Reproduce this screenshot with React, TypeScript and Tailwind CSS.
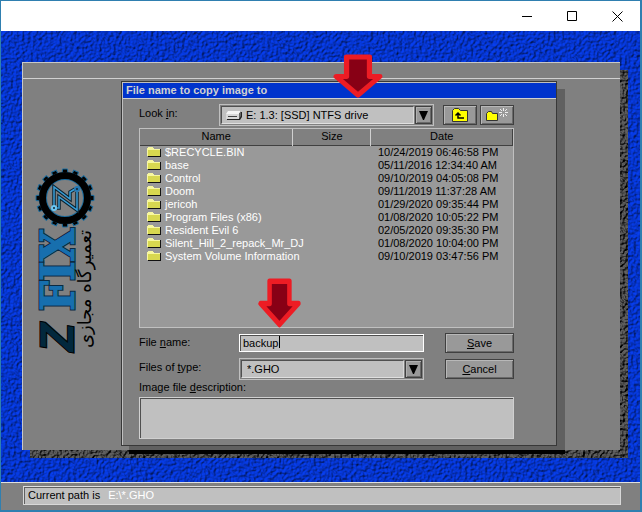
import React from "react";

const files = [
  ["$RECYCLE.BIN", "10/24/2019 06:46:58 PM"],
  ["base", "05/11/2016 12:34:40 AM"],
  ["Control", "09/10/2019 04:05:08 PM"],
  ["Doom", "09/11/2019 11:37:28 AM"],
  ["jericoh", "01/29/2020 09:35:44 PM"],
  ["Program Files (x86)", "01/08/2020 10:05:22 PM"],
  ["Resident Evil 6", "02/05/2020 09:35:30 PM"],
  ["Silent_Hill_2_repack_Mr_DJ", "01/08/2020 10:04:00 PM"],
  ["System Volume Information", "09/10/2019 03:47:56 PM"],
];

function Texture({ id, color, depth }: { id: string; color: string; depth: number }) {
  return (
    <svg className="absolute inset-0 h-full w-full" aria-hidden="true">
      <filter id={id} x="0" y="0" width="100%" height="100%" colorInterpolationFilters="sRGB">
        <feTurbulence type="fractalNoise" baseFrequency="0.35" numOctaves="2" seed="4" result="n" />
        <feDiffuseLighting in="n" surfaceScale={depth} diffuseConstant="1.12" lightingColor={color}>
          <feDistantLight azimuth="225" elevation="58" />
        </feDiffuseLighting>
      </filter>
      <rect width="100%" height="100%" filter={`url(#${id})`} />
    </svg>
  );
}

function FolderIcon() {
  return (
    <svg className="shrink-0" width="14" height="10" viewBox="0 0 14 10" aria-hidden="true" shapeRendering="crispEdges">
      <path d="M1 2h13v8H1z" fill="#111" />
      <path d="M0 1h1V0h5v1h1v1h6v7H0z" fill="#d8d850" />
      <path d="M0 1h1V0h5v1h1v1h6v1H1v6H0z" fill="#f7f7a0" />
    </svg>
  );
}

function DriveIcon() {
  return (
    <svg className="shrink-0" width="16" height="9" viewBox="0 0 16 9" aria-hidden="true">
      <path d="M1 3L3 1h13v5l-2 3H1z" fill="#222" />
      <path d="M0 3L2 0h13l-2 3z" fill="#f4f4f4" />
      <path d="M0 3h13v5H0z" fill="#d8d8d8" />
      <path d="M13 3l2-3v5l-2 3z" fill="#666" />
      <path d="M2 5.500h9" stroke="#444" />
    </svg>
  );
}

function RedArrow() {
  return (
    <svg className="h-full w-full" viewBox="0 0 50 46" preserveAspectRatio="none" aria-hidden="true">
      <path d="M14 3h22v20h10L25 42L4 23h10z" fill="#880015" stroke="#ed1c24" strokeWidth="5" strokeLinejoin="round" />
    </svg>
  );
}

function Logo() {
  const teeth = Array.from({ length: 16 }, (_, i) => i * 22.5);
  const circuit = "M-11 8V-11L5 1V-6L10 -9M-8 10H-6V-1L12 12V-6";
  return (
    <svg className="overflow-visible" width="64" height="188" viewBox="0 0 64 188" role="img" aria-label="Z FIX">
      <g transform="translate(31 32)">
        {teeth.map((a) => (
          <path key={a} d="M-3 -24L-2.500 -29H2.500L3 -24Z" transform={`rotate(${a})`} fill="#000" stroke="#1a6c9e" />
        ))}
        <circle r="22" fill="none" stroke="#1a6c9e" strokeWidth="8" />
        <circle r="22.500" fill="none" stroke="#000" strokeWidth="7" />
        <path d={circuit} fill="none" stroke="#0a2230" strokeWidth="3.500" />
        <path d={circuit} fill="none" stroke="#3a9fd8" strokeWidth="1.500" />
        <circle cx="-11" cy="10" r="2" fill="#123" stroke="#6cc8f4" strokeWidth="2" />
        <circle cx="12" cy="-9" r="2" fill="#123" stroke="#2379b5" strokeWidth="2" />
      </g>
      <g transform="translate(40 186) rotate(-90)">
        <text x="0" y="0" fontFamily="DejaVu Sans Condensed, DejaVu Sans, sans-serif" fontSize="46" fontWeight="700" fontStyle="italic" fill="#02283d" stroke="#000">Z</text>
        <text x="41" y="0" fontFamily="DejaVu Serif Condensed, DejaVu Serif, serif" fontSize="47" fontWeight="700" fill="#176fae" stroke="#0b2a42" strokeWidth="3" paintOrder="stroke">FIX</text>
        <text x="41" y="0" fontFamily="DejaVu Serif Condensed, DejaVu Serif, serif" fontSize="47" fontWeight="700" fill="#176fae" stroke="#176fae" aria-hidden="true">FIX</text>
      </g>
      <text transform="translate(57 123) rotate(-90)" textAnchor="middle" fontFamily="DejaVu Sans, sans-serif" fontSize="18" fill="#000">تعمیرگاه مجازی</text>
    </svg>
  );
}

const frame = "border border-[#c0c0c0] bg-[#808080] p-px";

function Picker({ id, value, icon }: { id: string; value: string; icon?: React.ReactNode }) {
  return (
    <div className={`flex h-[22px] min-w-0 flex-1 ${frame}`}>
      <div className="flex min-w-0 flex-1 items-center border border-[#505050] border-r-[#d8d8d8] border-b-[#e0e0e0] bg-[#c0c0c0] pl-1">
        {icon}
        <select id={id} className={`h-full min-w-0 flex-1 appearance-none bg-transparent text-black outline-none ${icon ? "pl-1" : "pl-px"}`}>
          <option>{value}</option>
        </select>
      </div>
      <button type="button" aria-label="Open list" className="ml-px flex w-[17px] items-center justify-center border border-[#404040] bg-[#999] shadow-[inset_1px_1px_0_#b0b0b0,inset_-1px_-1px_0_#6a6a6a]">
        <svg width="9" height="9" viewBox="0 0 9 9" aria-hidden="true"><path d="M0 0h9L5 9H4z" /></svg>
      </button>
    </div>
  );
}

const button = "flex h-5 items-center justify-center border border-[#404040] bg-[#999] shadow-[inset_1px_1px_0_#b8b8b8,inset_-1px_-1px_0_#6a6a6a]";

export default function App() {
  return (
    <div className="flex min-h-screen flex-col border-t border-r-2 border-b-2 border-l border-[#2f7fb0] bg-[#808080] font-['Liberation_Sans',Arial,sans-serif] text-[11px] leading-[13px] text-black">
      <header className="flex h-[30px] items-center justify-end bg-white">
        <button type="button" aria-label="Minimize" className="flex h-full w-[45px] items-center justify-center">
          <svg width="11" height="11" stroke="#000"><path d="M0 5.5h10" /></svg>
        </button>
        <button type="button" aria-label="Maximize" className="flex h-full w-[45px] items-center justify-center">
          <svg width="11" height="11" stroke="#000" fill="none"><path d="M.5 .5h9v9h-9z" /></svg>
        </button>
        <button type="button" aria-label="Close" className="flex h-full w-[45px] items-center justify-center">
          <svg width="11" height="11" stroke="#000"><path d="M.5 .5l10 10M10.500 .5l-10 10" /></svg>
        </button>
      </header>

      <main className="relative flex flex-1 flex-col overflow-hidden bg-[#0033cc] pt-[31px] pr-5 pb-8 pl-[21px]">
        <Texture id="water" color="#0638d8" depth={1.8} />
        <div className="relative flex flex-1 flex-col">
          <div className="absolute top-2 -right-2 -bottom-2 left-2 overflow-hidden bg-[#444]">
            <Texture id="shade" color="#585858" depth={5} />
          </div>
          <div className="relative flex flex-1 flex-col border-t border-l border-[#c8c8c8] bg-[#808080]">
            <div className="h-4 border-b border-[#d0d0d0]" />
            <div className="flex flex-1 pt-[2px] pr-[63px]">
              <aside className="w-[98px] shrink-0 pt-[85px] pl-[11px]">
                <Logo />
              </aside>
              <div className="relative min-w-0 flex-1">
                <div className="absolute top-2 -right-2 -bottom-1 left-2 bg-[#606060]" />
                <div className="absolute -right-2 -bottom-1 left-2 h-1 bg-black" />
                <section className="relative border border-[#383838] bg-[#808080]">
                  <div className="border-t border-l border-[#c0c0c0] pb-[6px]">
                    <h1 className="h-4 border-b border-[#d0d0d0] bg-[#0033cc] pl-[3px] text-[11px] leading-[15px] font-bold text-[#d0d0d0]">File name to copy image to</h1>
                    <form className="pt-[5px] pr-[42px] pl-4" onSubmit={(e) => e.preventDefault()}>
                      <div className="flex items-center">
                        <label htmlFor="look" className="w-20 shrink-0 pb-1">Look <u>i</u>n:</label>
                        <Picker id="look" value="E: 1.3: [SSD] NTFS drive" icon={<DriveIcon />} />
                        <button type="button" aria-label="Up one level" className={`${button} ml-[9px] w-[34px] shrink-0`}>
                          <svg width="16" height="14" viewBox="0 0 16 14" aria-hidden="true">
                            <path d="M.5 13.500V2.500L2.500 .5h4l2 2h7v11z" fill="#ff0" stroke="#333" />
                            <path d="M12 10H6V6M3.500 7.500L6 5l2.500 2.500" fill="none" stroke="#000" strokeWidth="1.500" />
                          </svg>
                        </button>
                        <button type="button" aria-label="New folder" className={`${button} ml-[3px] w-[34px] shrink-0`}>
                          <svg width="22" height="14" viewBox="0 0 22 14" aria-hidden="true">
                            <path d="M.5 12.500V5.500L2.500 3.500h3l1 2h5v7z" fill="#ff0" stroke="#333" />
                            <path d="M17.500 0v3M17.500 6v3M13 4.500h3M19 4.500h3M14 1l2 2M19 6l2 2M21 1l-2 2M16 6l-2 2" stroke="#eee" />
                          </svg>
                        </button>
                      </div>

                      <div className="mt-[2px] h-[200px] overflow-hidden border border-[#c0c0c0] bg-[#999]">
                        <table className="w-full table-fixed border-collapse">
                          <colgroup><col className="w-[41%]" /><col className="w-[21%]" /><col /></colgroup>
                          <thead>
                            <tr className="h-4 border-b border-[#404040] bg-[#808080]">
                              <th className="border-r border-[#d0d0d0] p-0 font-normal">Name</th>
                              <th className="border-r border-[#d0d0d0] p-0 font-normal">Size</th>
                              <th className="border-r border-[#404040] p-0 font-normal">Date</th>
                            </tr>
                          </thead>
                          <tbody>
                            {files.map(([name, date]) => (
                              <tr key={name} className="h-[13px] whitespace-nowrap">
                                <td className="p-0 text-white"><div className="flex items-center gap-1 pl-[7px]"><FolderIcon />{name}</div></td>
                                <td className="p-0" />
                                <td className="p-0 pl-[7px]">{date}</td>
                              </tr>
                            ))}
                          </tbody>
                        </table>
                      </div>

                      <div className="mt-[5px] flex items-center">
                        <label htmlFor="name" className="w-[100px] shrink-0 pb-[2px]">File <u>n</u>ame:</label>
                        <input id="name" defaultValue="backup" className="h-[18px] min-w-0 flex-1 border border-white bg-[#c0c0c0] px-[3px] text-black shadow-[inset_1px_1px_0_#505050] outline-none" />
                        <button type="submit" className={`${button} ml-[21px] w-[69px] shrink-0`}><span><u>S</u>ave</span></button>
                      </div>
                      <div className="mt-[5px] flex items-center">
                        <label htmlFor="type" className="w-[100px] shrink-0 pb-1">Files of <u>t</u>ype:</label>
                        <Picker id="type" value="*.GHO" />
                        <button type="button" className={`${button} ml-[21px] w-[69px] shrink-0`}><span><u>C</u>ancel</span></button>
                      </div>
                      <label htmlFor="desc" className="mt-px block">Image file <u>d</u>escription:</label>
                      <textarea id="desc" className="mt-[3px] block h-[42px] w-full resize-none border border-[#d0d0d0] bg-[#c0c0c0] shadow-[inset_1px_1px_0_#505050] outline-none" />
                    </form>
                  </div>
                  <div className="pointer-events-none absolute -top-7 left-[210px] h-[45px] w-[52px]"><RedArrow /></div>
                  <div className="pointer-events-none absolute top-[196px] left-[135px] h-[51px] w-[45px]"><RedArrow /></div>
                  <div className="pointer-events-none absolute top-[254px] left-[157px] h-3 w-px bg-black" />
                </section>
              </div>
            </div>
          </div>
        </div>
      </main>

      <footer className="h-7 border-t border-[#e0e0e0] pt-[3px] pr-[19px] pl-[22px]">
        <div className="flex h-[19px] items-center gap-2 border border-[#d8d8d8] border-t-[#e0e0e0] bg-[#c0c0c0] pl-1 shadow-[inset_1px_1px_0_#606060]">
          <span>Current path is</span>
          <span className="text-white">E:\*.GHO</span>
        </div>
      </footer>
    </div>
  );
}
